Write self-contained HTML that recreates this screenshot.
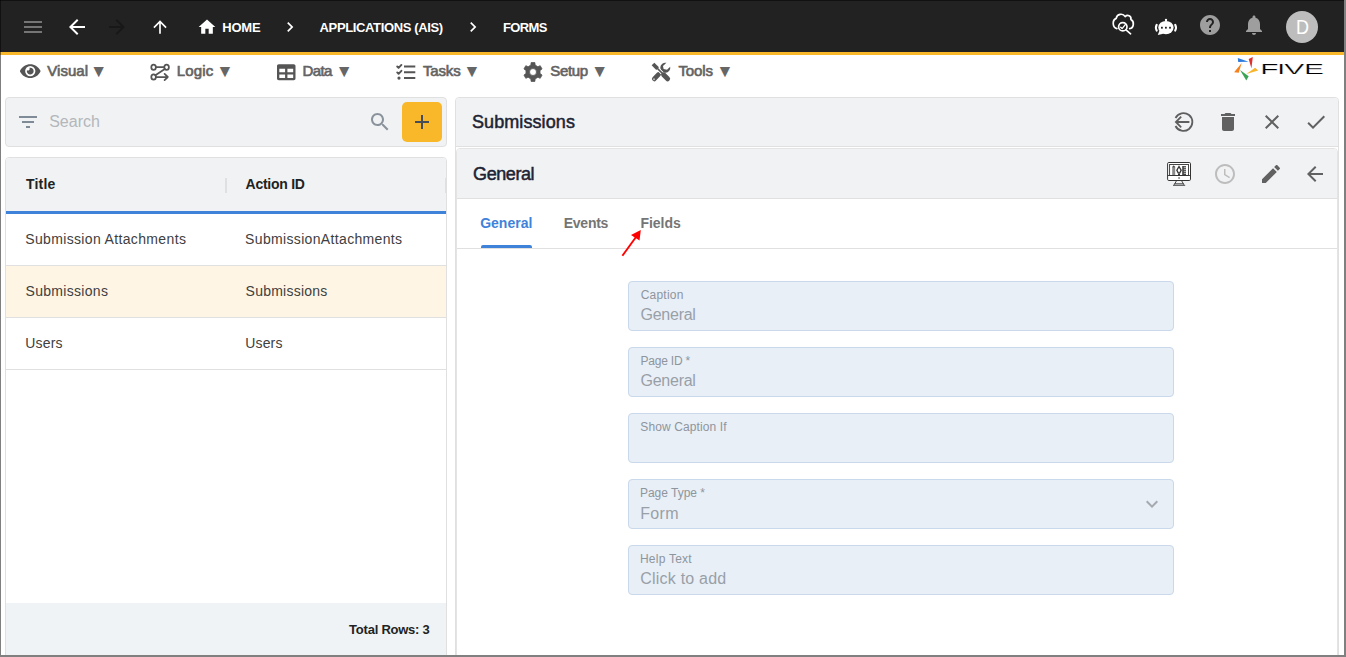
<!DOCTYPE html>
<html lang="en">
<head>
<meta charset="utf-8">
<title>Forms - Submissions</title>
<style>
*{box-sizing:border-box;margin:0;padding:0}
html,body{width:1346px;height:657px;overflow:hidden;background:#fff}
body{position:relative;font-family:"Liberation Sans",sans-serif;color:#333}
.abs{position:absolute}
.t{position:absolute;white-space:nowrap;line-height:1}
svg{position:absolute;display:block;overflow:visible}
/* top bar */
#topbar{left:0;top:0;width:1346px;height:52px;background:#222}
#yellow{left:0;top:52px;width:1346px;height:3px;background:#f8b82a}
.bc{color:#fff;font-size:13px;top:21px;font-weight:bold}
/* menu */
.mi{color:#636363;font-size:15px;top:63px;-webkit-text-stroke:.65px #636363}
.arr{color:#666;font-size:17.500px;top:62.700px}
/* panels */
.panel{background:#f1f2f4;border:1px solid #e0e0e0;border-radius:4px}
.hd{font-weight:bold;font-size:14px;color:#222}
.cell{font-size:14px;color:#404040}
.lab{font-size:12px;color:#8e959d}
.val{font-size:16px;color:#999fa7;margin-top:.5px}
.field{left:628px;width:546px;height:50px;background:#e8eff7;border:1px solid #c9d8ea;border-radius:4px}
</style>
</head>
<body>
<!-- TOP BAR -->
<div id="topbar" class="abs"></div>
<div id="yellow" class="abs"></div>

<!-- hamburger -->
<svg style="left:21px;top:15px" width="24" height="24" viewBox="0 0 24 24"><path fill="#757575" d="M3 18h18v-2H3v2zm0-5h18v-2H3v2zm0-7v2h18V6H3z"/></svg>
<!-- back -->
<svg style="left:65px;top:15px" width="24" height="24" viewBox="0 0 24 24"><path fill="#fff" d="M20 11H7.83l5.59-5.59L12 4l-8 8 8 8 1.41-1.41L7.83 13H20v-2z"/></svg>
<!-- forward (disabled) -->
<svg style="left:105px;top:15px" width="24" height="24" viewBox="0 0 24 24"><path fill="#181818" d="M12 4l-1.41 1.41L16.17 11H4v2h12.17l-5.58 5.59L12 20l8-8z"/></svg>
<!-- up -->
<svg style="left:150px;top:17.200px" width="20" height="20" viewBox="0 0 24 24"><path fill="#fff" d="M4 12l1.41 1.41L11 7.83V20h2V7.830l5.58 5.590L20 12l-8-8-8 8z"/></svg>
<!-- home -->
<svg style="left:197px;top:17px" width="20" height="20" viewBox="0 0 24 24"><path fill="#fff" d="M10 20v-6h4v6h5v-8h3L12 3 2 12h3v8z"/></svg>
<div class="t bc" id="bc1" style="left:222.22px;letter-spacing:-0.181px">HOME</div>
<svg style="left:279.800px;top:17px" width="20" height="20" viewBox="0 0 24 24"><path fill="#fff" d="M10 6L8.59 7.410 13.17 12l-4.58 4.590L10 18l6-6z"/></svg>
<div class="t bc" id="bc2" style="left:319.58px;letter-spacing:-0.366px">APPLICATIONS (AIS)</div>
<svg style="left:462.500px;top:17px" width="20" height="20" viewBox="0 0 24 24"><path fill="#fff" d="M10 6L8.59 7.410 13.17 12l-4.58 4.590L10 18l6-6z"/></svg>
<div class="t bc" id="bc3" style="left:502.91px;letter-spacing:-0.602px">FORMS</div>

<!-- right icons placeholder -->

<!-- cloud check -->
<svg style="left:1100px;top:4px" width="50" height="46" viewBox="1100 4 50 46" fill="none" stroke="#fff" stroke-width="1.700" stroke-linecap="round" stroke-linejoin="round"><path d="M1116.900 28.600A4.500 5.300 0 0 1 1116.200 18.400A4.900 4.900 0 0 1 1125.200 16.600A3.300 3.300 0 0 1 1130.900 19.400A4 4.800 0 0 1 1129.700 28.600"/><circle cx="1122.800" cy="26.760" r="4.200"/><path d="M1126 29.900L1130.600 33.800"/><path stroke-width="1.400" d="M1120.700 27.200L1122.100 28.600 1125.300 24.600"/></svg>
<!-- bot chat -->
<svg style="left:1150px;top:10px" width="34" height="34" viewBox="1150 10 34 34"><ellipse cx="1165.950" cy="27.600" rx="7.650" ry="6.700" fill="#fff"/><path fill="#fff" d="M1157.800 35L1159.400 30.800 1163.400 33.800z"/><circle cx="1166" cy="20" r="1.200" fill="#fff"/><rect x="1165.300" y="20" width="1.400" height="1.500" fill="#fff"/><path fill="none" stroke="#fff" stroke-width="2.100" stroke-linecap="round" d="M1156.700 24.800Q1155.100 27.700 1156.700 30.600M1175.200 24.800Q1176.800 27.700 1175.200 30.600"/><rect x="1161" y="26.800" width="1.800" height="1.800" fill="#222"/><rect x="1165" y="26.800" width="1.800" height="1.800" fill="#222"/><rect x="1169.100" y="26.800" width="1.800" height="1.800" fill="#222"/></svg>
<!-- help -->
<svg style="left:1198px;top:13px" width="24" height="24" viewBox="0 0 24 24"><path fill="#9e9e9e" d="M12 2C6.480 2 2 6.480 2 12s4.480 10 10 10 10-4.480 10-10S17.520 2 12 2zm1 17h-2v-2h2v2zm2.070-7.750l-.9.920C13.450 12.900 13 13.500 13 15h-2v-.5c0-1.100.450-2.100 1.170-2.830l1.240-1.260c.370-.360.590-.860.590-1.410 0-1.100-.9-2-2-2s-2 .9-2 2H8c0-2.210 1.790-4 4-4s4 1.790 4 4c0 .880-.360 1.680-.930 2.250z"/></svg>
<!-- bell -->
<svg style="left:1242px;top:13px" width="24" height="24" viewBox="0 0 24 24"><path fill="#9e9e9e" d="M12 22c1.100 0 2-.9 2-2h-4c0 1.100.890 2 2 2zm6-6v-5c0-3.070-1.640-5.640-4.500-6.320V4c0-.830-.670-1.500-1.500-1.500s-1.500.670-1.500 1.500v.680C7.630 5.360 6 7.920 6 11v5l-2 2v1h16v-1l-2-2z"/></svg>
<!-- avatar -->
<div class="abs" style="left:1286px;top:11px;width:32px;height:32px;border-radius:50%;background:#bdbdbd"></div>
<div class="t" id="av" style="left:1295.600px;top:17px;font-size:20px;color:#fff;transform:scaleX(.9);transform-origin:0 0">D</div>


<!-- MENU BAR -->

<!-- Visual -->
<svg style="left:19.700px;top:62.100px" width="20.500" height="18.220" viewBox="0 0 576 512"><path fill="#555" d="M572.520 241.400C518.290 135.590 410.930 64 288 64S57.680 135.640 3.480 241.410a32.350 32.350 0 0 0 0 29.190C57.710 376.410 165.070 448 288 448s230.320-71.640 284.520-177.410a32.350 32.350 0 0 0 0-29.190zM288 400a144 144 0 1 1 144-144 143.930 143.930 0 0 1-144 144zm0-240a95.310 95.310 0 0 0-25.310 3.790 47.850 47.850 0 0 1-66.900 66.900A95.780 95.780 0 1 0 288 160z"/></svg>
<div class="t mi" id="m1" style="left:47.25px;letter-spacing:0.032px">Visual</div>
<div class="t arr" id="a1" style="left:90.06px">&#9660;</div>
<!-- Logic -->
<svg style="left:140px;top:58px" width="40" height="28" viewBox="140 58 40 28" fill="none" stroke="#555" stroke-width="1.750" stroke-linecap="round" stroke-linejoin="round"><ellipse cx="153.600" cy="67.200" rx="2.300" ry="2.700"/><ellipse cx="166.600" cy="67.200" rx="2.300" ry="2.700"/><ellipse cx="153.600" cy="77" rx="2.300" ry="2.700"/><path d="M156 67.200H164.200M164.800 69L155.400 75.200M156 77H167.500M164.600 73.900L167.800 77 164.600 80.100"/></svg>
<div class="t mi" id="m2" style="left:176.80px;letter-spacing:0.124px">Logic</div>
<div class="t arr" id="a2" style="left:216.16px">&#9660;</div>
<!-- Data -->
<svg style="left:276.600px;top:62.700px" width="18.500" height="18.500" viewBox="0 0 512 512"><path fill="#555" d="M464 32H48C21.490 32 0 53.490 0 80v352c0 26.510 21.490 48 48 48h416c26.510 0 48-21.490 48-48V80c0-26.510-21.490-48-48-48zM224 416H64v-96h160v96zm0-160H64v-96h160v96zm224 160H288v-96h160v96zm0-160H288v-96h160v96z"/></svg>
<div class="t mi" id="m3" style="left:302.55px;letter-spacing:-0.638px">Data</div>
<div class="t arr" id="a3" style="left:335.57px">&#9660;</div>
<!-- Tasks -->
<svg style="left:388px;top:58px" width="40" height="28" viewBox="388 58 40 28" fill="none" stroke="#555" stroke-linecap="round" stroke-linejoin="round"><path stroke-width="2" stroke-linecap="butt" d="M404 66.400H415.300M404 72.200H415.300M404 78.100H415.300"/><path stroke-width="1.900" d="M397.200 66.500L398.600 67.900 401.400 64.900M397.200 72.400L398.600 73.800 401.400 70.800"/><circle cx="399" cy="78.100" r="1.600" fill="#555" stroke="none"/></svg>
<div class="t mi" id="m4" style="left:422.95px;letter-spacing:-0.136px">Tasks</div>
<div class="t arr" id="a4" style="left:463.36px">&#9660;</div>
<!-- Setup -->
<svg style="left:523px;top:62px" width="20" height="20" viewBox="-10 -10 20 20"><path fill="#555" stroke="#555" stroke-width="0.800" stroke-linejoin="round" fill-rule="evenodd" d="M2.130 -6.880 L1.870 -9.400 L-1.870 -9.400 L-2.130 -6.880 L-4.890 -5.280 L-7.200 -6.320 L-9.070 -3.080 L-7.020 -1.600 L-7.020 1.600 L-9.070 3.080 L-7.200 6.320 L-4.890 5.280 L-2.130 6.880 L-1.870 9.400 L1.870 9.400 L2.130 6.880 L4.890 5.280 L7.200 6.320 L9.070 3.080 L7.020 1.600 L7.020 -1.600 L9.070 -3.080 L7.200 -6.320 L4.890 -5.280Z M3.500 0 A3.500 3.500 0 1 0 -3.500 0 A3.500 3.500 0 1 0 3.500 0Z"/></svg>
<div class="t mi" id="m5" style="left:550.32px;letter-spacing:-0.374px">Setup</div>
<div class="t arr" id="a5" style="left:590.99px">&#9660;</div>
<!-- Tools -->
<svg style="left:642px;top:58px" width="40" height="28" viewBox="642 58 40 28" fill="none" stroke="#555"><path stroke-width="4.700" stroke-linecap="round" d="M654.300 78.900L658.600 74.400"/><path fill="#555" stroke="none" d="M666.400 62.800A5 5 0 1 0 670.200 66.700L667 69.800 663.600 69 663 65.900z"/><path stroke="#fff" stroke-width="3.300" d="M657.800 68.800L663 74"/><path stroke-width="3.800" stroke-linecap="butt" d="M653 64L657.600 68.600"/><path stroke-width="1.700" d="M657 68L662.500 73.500"/><path stroke-width="5" stroke-linecap="round" d="M663.600 74.800L667.600 78.800"/><circle cx="654" cy="79.200" r="1" fill="#bbb" stroke="none"/></svg>
<div class="t mi" id="m6" style="left:678.50px;letter-spacing:-0.127px">Tools</div>
<div class="t arr" id="a6" style="left:716.36px">&#9660;</div>
<!-- FIVE logo -->
<svg style="left:1230px;top:55px" width="100" height="30" viewBox="1230 55 100 30"><path fill="#2f7ce0" d="M1237.800 58L1248.600 61.800 1238.200 62z"/><path fill="#e03131" d="M1252.800 57.100L1248.700 58.900 1251.400 68.300z"/><path fill="#f7b52a" d="M1255.200 67.800L1258.200 70.500 1246.300 73.900z"/><path fill="#3aa655" d="M1240 70L1248.700 76.300 1246.300 80.500z"/><path fill="#f58220" d="M1241.700 62.900L1234.100 72.300 1238.700 72.700z"/><text id="five" transform="translate(0,74.100) scale(2.1739,1.0435)" x="579.74 587.47 590.73 599.89" y="0" font-family="Liberation Sans, sans-serif" font-size="13.800" fill="#000" stroke="#fff" stroke-width=".2">FIVE</text></svg>


<!-- LEFT: search panel -->
<div class="abs panel" style="left:5px;top:97px;width:442px;height:50px"></div>
<svg style="left:16px;top:110px" width="24" height="24" viewBox="0 0 24 24"><path fill="#7f8b97" d="M10 18h4v-2h-4v2zM3 6v2h18V6H3zm3 7h12v-2H6v2z"/></svg>
<div class="t" id="srch" style="left:49.20px;top:113.700px;font-size:16px;color:#b3b7bb">Search</div>
<svg style="left:368px;top:110px" width="24" height="24" viewBox="0 0 24 24"><path fill="#8a939c" d="M15.5 14h-.79l-.28-.27C15.410 12.590 16 11.110 16 9.500 16 5.910 13.090 3 9.500 3S3 5.910 3 9.500 5.910 16 9.500 16c1.610 0 3.090-.59 4.230-1.570l.27.280v.79l5 4.990L20.490 19l-4.990-5zm-6 0C7.010 14 5 11.990 5 9.500S7.010 5 9.500 5 14 7.010 14 9.500 11.990 14 9.500 14z"/></svg>
<div class="abs" style="left:402px;top:102px;width:40px;height:40px;background:#f8b82a;border-radius:5px"></div>
<svg style="left:410px;top:110px" width="24" height="24" viewBox="0 0 24 24"><path fill="#454b57" d="M19 13h-6v6h-2v-6H5v-2h6V5h2v6h6v2z"/></svg>

<!-- LEFT: table panel -->
<div class="abs panel" style="left:5px;top:157px;width:442px;height:510px;background:#fff;overflow:hidden">
  <div class="abs" style="left:0;top:0;width:440px;height:53px;background:#f1f2f4"></div>
  <div class="abs" style="left:0;top:53px;width:440px;height:3px;background:#3f82da"></div>
  <div class="abs" style="left:0;top:107px;width:440px;height:1px;background:#e0e0e0"></div>
  <div class="abs" style="left:0;top:108px;width:440px;height:51px;background:#fef5e4"></div>
  <div class="abs" style="left:0;top:159px;width:440px;height:1px;background:#e0e0e0"></div>
  <div class="abs" style="left:0;top:211px;width:440px;height:1px;background:#e0e0e0"></div>
  <div class="abs" style="left:0;top:445px;width:440px;height:60px;background:#eff3f5"></div>
  <div class="abs" style="left:219px;top:20px;width:2px;height:15px;background:#e0e0e0"></div>
  <div class="abs" style="left:439px;top:20px;width:2px;height:15px;background:#e0e0e0"></div>
</div>
<div class="t hd" id="h1" style="left:25.98px;top:177.400px;letter-spacing:0.215px">Title</div>
<div class="t hd" id="h2" style="left:245.52px;top:177.400px;letter-spacing:-0.250px">Action ID</div>
<div class="t cell" id="c11" style="left:25.24px;top:232px;letter-spacing:0.350px">Submission Attachments</div>
<div class="t cell" id="c12" style="left:245.11px;top:232px;letter-spacing:0.340px">SubmissionAttachments</div>
<div class="t cell" id="c21" style="left:25.59px;top:284px;letter-spacing:0.294px">Submissions</div>
<div class="t cell" id="c22" style="left:245.59px;top:284px;letter-spacing:0.241px">Submissions</div>
<div class="t cell" id="c31" style="left:25.18px;top:336px;letter-spacing:0.191px">Users</div>
<div class="t cell" id="c32" style="left:245.18px;top:336px;letter-spacing:0.174px">Users</div>
<div class="t" id="tot" style="left:349.10px;top:623px;font-size:13px;font-weight:bold;color:#222;letter-spacing:-0.236px">Total Rows: 3</div>

<!-- RIGHT panel -->
<div class="abs panel" style="left:455px;top:97px;width:884px;height:570px;background:#fff;overflow:hidden">
  <div class="abs" style="left:0;top:0;width:882px;height:49px;background:#f1f2f4;border-bottom:1px solid #e0e0e0"></div>
</div>
<div class="abs" style="left:456px;top:148px;width:882px;height:520px;background:#fff;border:1px solid #e4e4e4;border-radius:4px 4px 0 0;overflow:hidden">
  <div class="abs" style="left:0;top:0;width:880px;height:50px;background:#f1f2f4;border-bottom:1px solid #e0e0e0"></div>
  <div class="abs" style="left:0;top:99px;width:880px;height:1px;background:#e0e0e0"></div>
</div>
<div class="t" id="ttl1" style="left:471.96px;top:113px;font-size:18px;color:#1d2333;-webkit-text-stroke:.5px #1d2333;letter-spacing:0.091px">Submissions</div>
<div class="t" id="ttl2" style="left:473.06px;top:165px;font-size:18px;color:#1d2333;-webkit-text-stroke:.5px #1d2333;letter-spacing:-0.415px">General</div>
<div class="t" id="tab1" style="left:480.18px;top:216px;font-size:14px;font-weight:bold;color:#3f82da;letter-spacing:0.008px">General</div>
<div class="t" id="tab2" style="left:563.72px;top:216px;font-size:14px;font-weight:bold;color:#757575;letter-spacing:-0.250px">Events</div>
<div class="t" id="tab3" style="left:640.50px;top:216px;font-size:14px;font-weight:bold;color:#757575;letter-spacing:-0.050px">Fields</div>
<div class="abs" style="left:481px;top:245px;width:51px;height:3px;background:#3f82da;border-radius:2px 2px 0 0"></div>

<!-- panel header icons row 1 -->
<svg style="left:1170px;top:108px" width="28" height="28" viewBox="1170 108 28 28" fill="none" stroke="#5f5f5f" stroke-width="1.800" stroke-linecap="butt"><path d="M1175.500 118A8.900 8.900 0 1 1 1175.500 126"/><path d="M1189.400 122H1176.600M1181.200 116.700L1175.900 122 1181.200 127.300"/></svg>
<svg style="left:1216px;top:110px" width="24" height="24" viewBox="0 0 24 24"><path fill="#616161" d="M6 19c0 1.100.9 2 2 2h8c1.100 0 2-.9 2-2V7H6v12zM19 4h-3.500l-1-1h-5l-1 1H5v2h14V4z"/></svg>
<svg style="left:1260px;top:110px" width="24" height="24" viewBox="0 0 24 24"><path fill="#616161" d="M19 6.410L17.590 5 12 10.590 6.410 5 5 6.410 10.590 12 5 17.590 6.410 19 12 13.410 17.590 19 19 17.590 13.410 12z"/></svg>
<svg style="left:1304px;top:110px" width="24" height="24" viewBox="0 0 24 24"><path fill="#616161" d="M9 16.170L4.830 12l-1.420 1.410L9 19 21 7l-1.410-1.410z"/></svg>
<!-- row 2 -->
<svg style="left:1167px;top:162px" width="24" height="24" viewBox="0 0 24 24" fill="none" stroke="#333" stroke-width="1"><rect x=".6" y=".5" width="22.900" height="18" rx="1.200" fill="#fff"/><rect x="2.600" y="2.500" width="18.900" height="11" stroke-width=".9"/><path d="M.6 13.500h22.900M9.600 18.500l-2.400 4.300M14.500 18.500l2.400 4.300M6 23.300h12.200M7.500 21.800h9.200" stroke-width=".9"/><rect x="5.200" y="4.500" width="3" height="8.500" fill="#8a8a8a" stroke="none"/><path fill="#444" stroke="none" d="M6.700 3.300l1.500 2h-3zM15.200 4h3.800v9h-3.800z"/><path stroke="#fff" stroke-width=".7" d="M16.800 5.300h2.200M16.800 7.300h2.200M16.800 9.300h2.200M16.800 11.300h2.200"/><path fill="#333" stroke="none" d="M12 3.300l2.900 4.900-1.700 3.300h-2.400l-1.700-3.300zM11 11.800h2v1.500h-2z"/><path fill="#fff" stroke="none" d="M12 5.800l1.400 2.500-1 1.900h-.8l-1-1.900z"/><circle cx="12.050" cy="16" r=".8" fill="#333" stroke="none"/></svg>
<svg style="left:1213px;top:162px" width="24" height="24" viewBox="0 0 24 24"><path fill="#bdbdbd" d="M11.990 2C6.470 2 2 6.480 2 12s4.470 10 9.990 10C17.520 22 22 17.520 22 12S17.520 2 11.990 2zM12 20c-4.420 0-8-3.580-8-8s3.580-8 8-8 8 3.580 8 8-3.580 8-8 8zm.5-13H11v6l5.250 3.150.750-1.230-4.500-2.670z"/></svg>
<svg style="left:1259px;top:162px" width="24" height="24" viewBox="0 0 24 24"><path fill="#616161" d="M3 17.250V21h3.750L17.810 9.940l-3.750-3.750L3 17.250zM20.710 7.040c.390-.390.390-1.020 0-1.410l-2.340-2.340c-.390-.390-1.020-.390-1.410 0l-1.830 1.830 3.750 3.750 1.830-1.830z"/></svg>
<svg style="left:1303px;top:162px" width="24" height="24" viewBox="0 0 24 24"><path fill="#616161" d="M20 11H7.830l5.590-5.590L12 4l-8 8 8 8 1.410-1.410L7.830 13H20v-2z"/></svg>
<!-- red arrow -->
<svg style="left:600px;top:205px" width="100" height="60" viewBox="600 205 100 60"><path d="M622.400 255.700L636 237" stroke="#f00" stroke-width="1.900" fill="none"/><path fill="#f00" d="M640.800 230.100L631 235.100 639.500 240.600z"/></svg>

<!-- form fields -->
<div class="abs field" style="top:281px"></div>
<div class="abs field" style="top:347px"></div>
<div class="abs field" style="top:413px"></div>
<div class="abs field" style="top:479px"></div>
<div class="abs field" style="top:545px"></div>
<div class="t lab" id="l1" style="left:640.71px;top:289px;letter-spacing:0.213px">Caption</div>
<div class="t val" id="v1" style="left:640.56px;top:306px;letter-spacing:-0.260px">General</div>
<div class="t lab" id="l2" style="left:640.48px;top:355px;letter-spacing:-0.207px">Page ID *</div>
<div class="t val" id="v2" style="left:640.56px;top:372px;letter-spacing:-0.260px">General</div>
<div class="t lab" id="l3" style="left:640.29px;top:421px;letter-spacing:0.108px">Show Caption If</div>
<div class="t lab" id="l4" style="left:639.98px;top:487px;letter-spacing:-0.017px">Page Type *</div>
<div class="t val" id="v4" style="left:640.25px;top:505px;letter-spacing:0.333px">Form</div>
<div class="t lab" id="l5" style="left:639.98px;top:553px;letter-spacing:0.228px">Help Text</div>
<div class="t val" id="v5" style="left:640.32px;top:570px;letter-spacing:0.203px">Click to add</div>
<svg style="left:1140px;top:492px" width="24" height="24" viewBox="0 0 24 24"><path fill="#a5a9b0" d="M16.590 8.590L12 13.170 7.410 8.590 6 10l6 6 6-6z"/></svg>

<!-- frame -->
<div class="abs" style="left:0;top:0;width:1346px;height:1px;background:rgba(0,0,0,.5)"></div>
<div class="abs" style="left:0;top:0;width:1px;height:657px;background:rgba(0,0,0,.5)"></div>
<div class="abs" style="left:1344px;top:0;width:2px;height:657px;background:#808080"></div>
<div class="abs" style="left:0;top:655px;width:1346px;height:2px;background:#808080"></div>
</body>
</html>
